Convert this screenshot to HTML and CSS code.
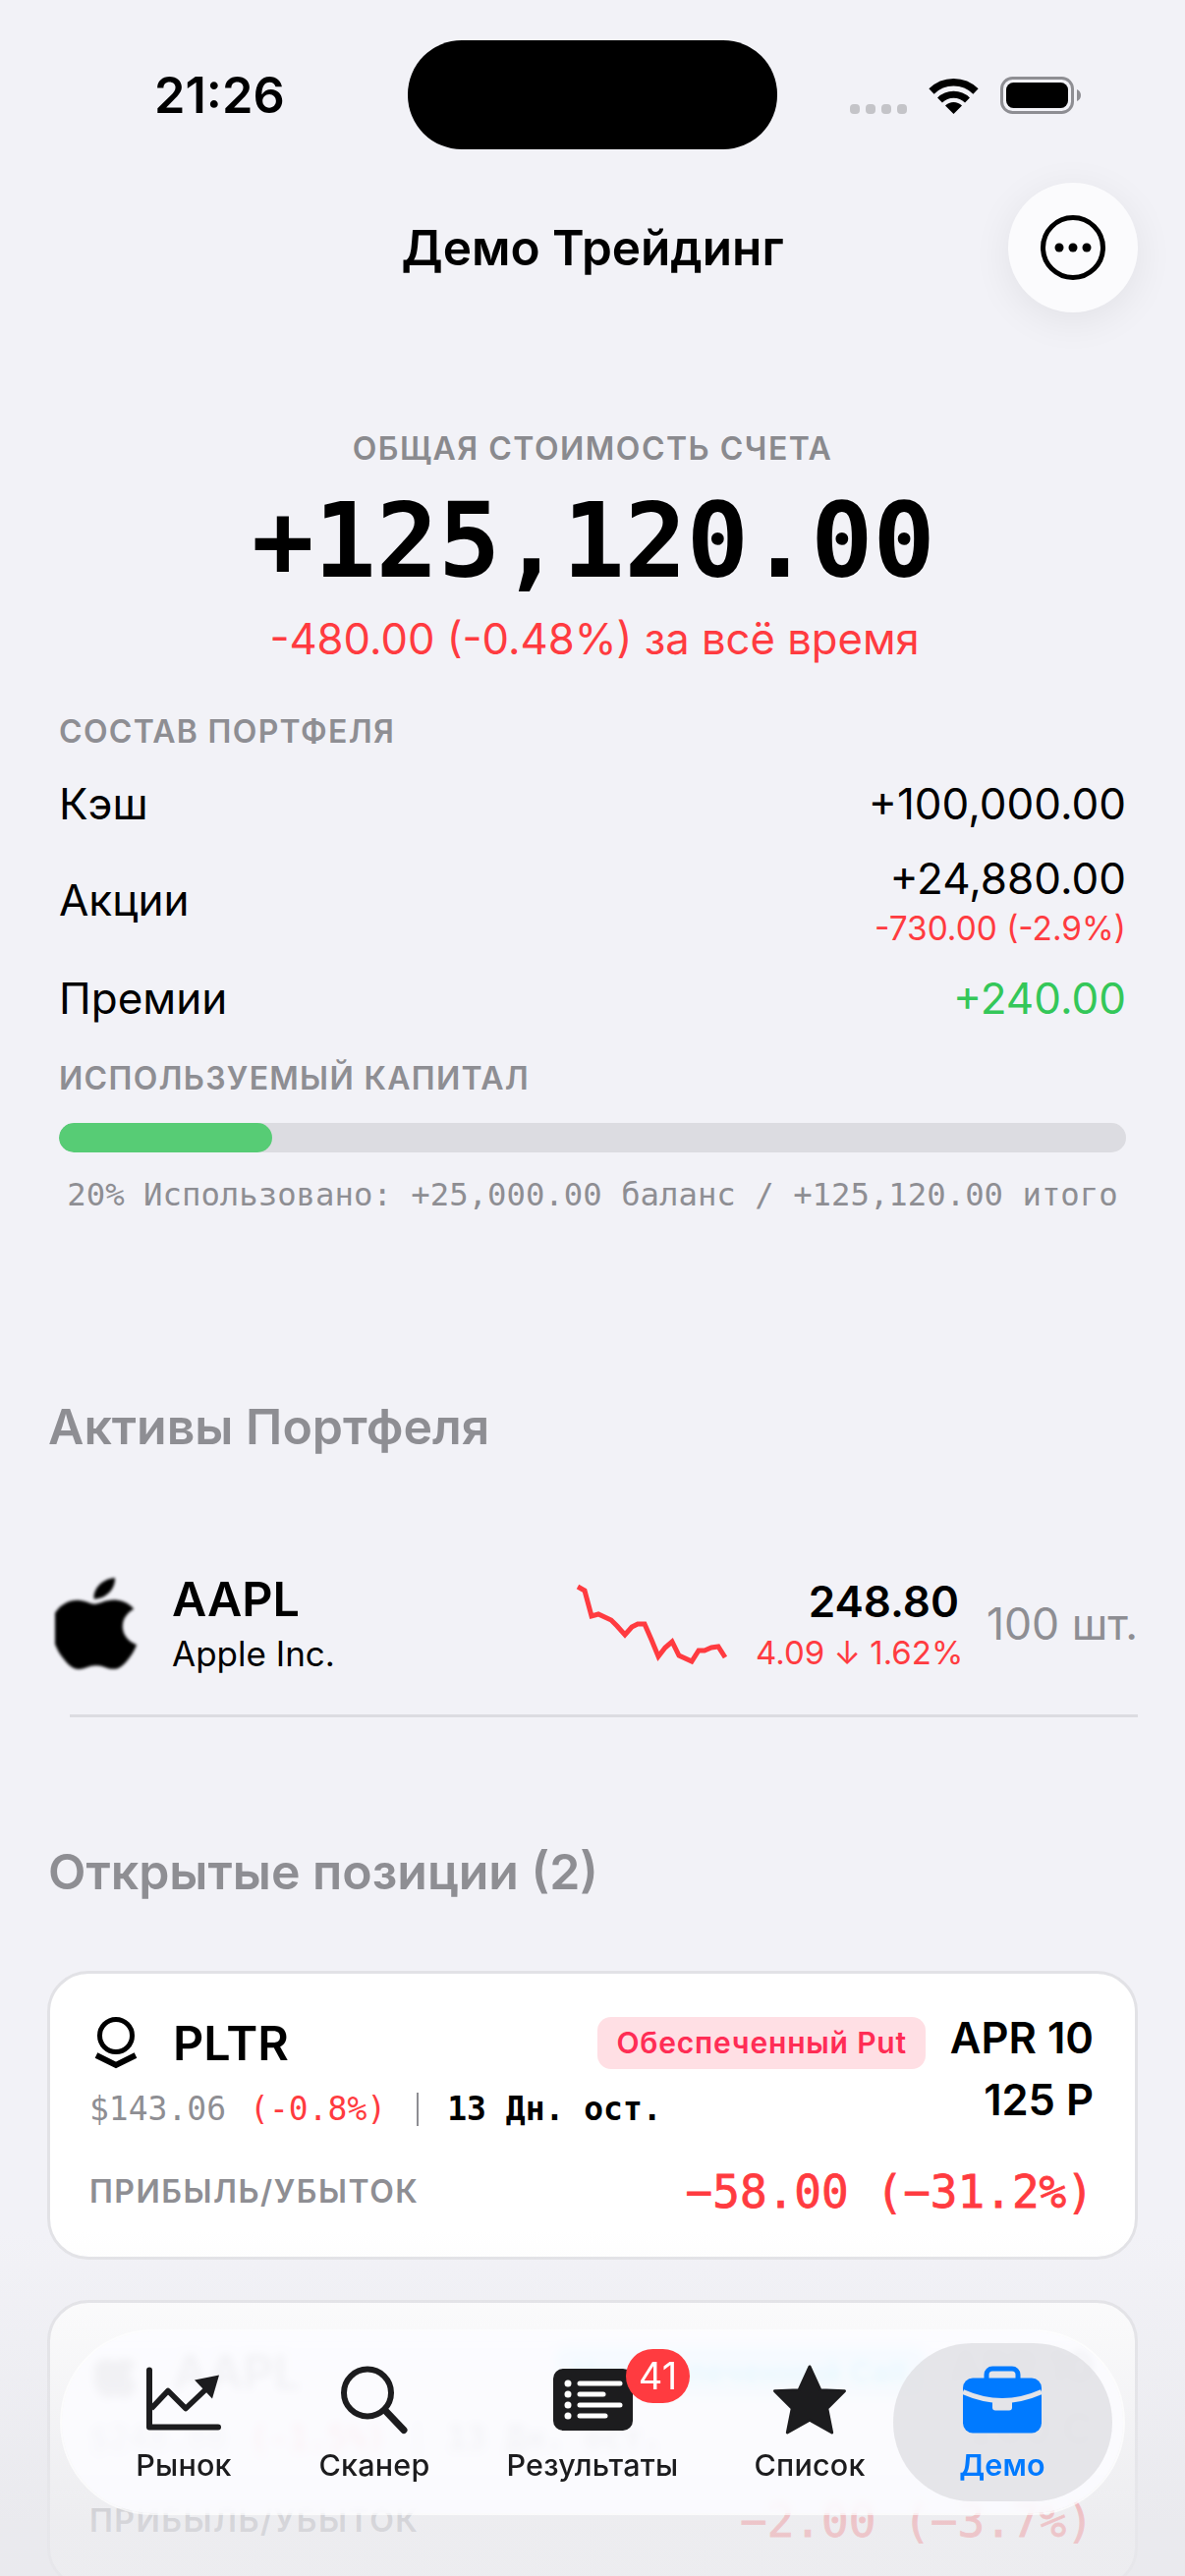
FILE: index.html
```html
<!DOCTYPE html>
<html lang="ru">
<head>
    <meta charset="utf-8">
    <title>Демо Трейдинг</title>
    <link rel="stylesheet" href="styles.css">
</head>
<body>
    <div class="page">
        <div class="status-bar">
            <span class="time">21:26</span>
            <div class="island"></div>
            <div class="signal"><i></i><i></i><i></i><i></i></div>
            <svg class="wifi" width="51" height="38" viewBox="0 0 51 38">
                <path d="M3 15A32 32 0 0 1 48 15" fill="none" stroke="#000" stroke-width="7.5"/>
                <path d="M11.500 24A20 20 0 0 1 39.500 24" fill="none" stroke="#000" stroke-width="7"/>
                <path d="M25.500 38L17 29.500A12 12 0 0 1 34 29.500Z" fill="#000"/>
            </svg>
            <svg class="battery" width="82" height="38" viewBox="0 0 82 38">
                <rect x="1.500" y="1.500" width="72" height="35" rx="11" fill="none" stroke="#8e8e93" stroke-width="3"/>
                <rect x="6" y="6" width="63" height="26" rx="7.500" fill="#000"/>
                <path d="M78 13C80.500 14 82 16 82 19C82 22 80.500 24 78 25Z" fill="#8e8e93"/>
            </svg>
        </div>

        <div class="nav">
            <h1 class="nav-title">Демо Трейдинг</h1>
            <div class="more-btn">
                <svg width="70" height="70" viewBox="0 0 70 70">
                    <circle cx="35" cy="35" r="30.500" fill="none" stroke="#000" stroke-width="5"/>
                    <circle cx="21" cy="35" r="4.500"/>
                    <circle cx="35" cy="35" r="4.500"/>
                    <circle cx="49" cy="35" r="4.500"/>
                </svg>
            </div>
        </div>

        <div class="summary">
            <div class="summary-label">ОБЩАЯ СТОИМОСТЬ СЧЕТА</div>
            <div class="summary-value">+125,120.00</div>
            <div class="summary-change">-480.00 (-0.48%) за всё время</div>
        </div>

        <div class="portfolio">
            <div class="caption caption-first">СОСТАВ ПОРТФЕЛЯ</div>
            <div class="line line-cash">
                <span>Кэш</span>
                <span>+100,000.00</span>
            </div>
            <div class="line line-stocks">
                <span>Акции</span>
                <div class="line-right">
                    <div class="line-main">+24,880.00</div>
                    <div class="line-sub">-730.00 (-2.9%)</div>
                </div>
            </div>
            <div class="line line-premium">
                <span>Премии</span>
                <span class="green">+240.00</span>
            </div>
            <div class="caption caption-capital">ИСПОЛЬЗУЕМЫЙ КАПИТАЛ</div>
            <div class="progress"><div class="progress-fill" style="width: 20%"></div></div>
            <div class="progress-text">20% Использовано: +25,000.00 баланс / +125,120.00 итого</div>
        </div>

        <h2 class="section-title section-assets">Активы Портфеля</h2>

        <div class="asset">
            <svg class="apple" width="84" height="93" viewBox="3 0 19 24" preserveAspectRatio="none">
                <path d="M12.152 6.896c-.948 0-2.415-1.078-3.96-1.04-2.04.027-3.91 1.183-4.961 3.014-2.117 3.675-.546 9.103 1.519 12.09 1.013 1.454 2.208 3.09 3.792 3.039 1.52-.065 2.09-.987 3.935-.987 1.831 0 2.35.987 3.96.948 1.637-.026 2.676-1.48 3.676-2.948 1.156-1.688 1.636-3.325 1.662-3.415-.039-.013-3.182-1.221-3.22-4.857-.026-3.04 2.48-4.494 2.597-4.559-1.429-2.09-3.623-2.324-4.39-2.376-2-.156-3.675 1.09-4.61 1.09zM15.53 3.83c.843-1.012 1.4-2.427 1.245-3.83-1.207.052-2.662.805-3.532 1.818-.78.896-1.454 2.338-1.273 3.714 1.338.104 2.715-.688 3.559-1.701"/>
            </svg>
            <div class="asset-name">
                <div class="asset-ticker">AAPL</div>
                <div class="asset-company">Apple Inc.</div>
            </div>
            <svg class="spark" width="160" height="90" viewBox="0 0 160 90">
                <polyline points="3,7 10,11 17,37 24,35 37,41 43,47 51,56 58,48 64,45 71,45 78,61 85,78 92,69 99,63 106,77 119,83 126,72 132,72 139,69 146,68 153,79" fill="none" stroke="#ff3b40" stroke-width="5"/>
            </svg>
            <div class="asset-price">
                <div class="asset-last">248.80</div>
                <div class="asset-move">4.09 ↓ 1.62%</div>
            </div>
            <div class="asset-qty">100 шт.</div>
        </div>
        <div class="divider"></div>

        <h2 class="section-title section-open">Открытые позиции (2)</h2>

        <div class="card">
            <div class="card-row">
                <div class="card-name">
                    <svg class="card-logo" width="44" height="53" viewBox="0 0 44 53">
                        <circle cx="22" cy="19" r="16.500" fill="none" stroke="#000" stroke-width="5"/>
                        <path d="M2 39L22 49L42 39" fill="none" stroke="#000" stroke-width="6"/>
                    </svg>
                    <span class="card-ticker">PLTR</span>
                </div>
                <span class="pill pill-put">Обеспеченный Put</span>
                <span class="card-expiry">APR 10</span>
            </div>
            <div class="card-row card-row-mid">
                <div class="card-info">
                    <span class="gray">$143.06</span><span class="red">(-0.8%)</span><span class="sep"></span><b>13 Дн. ост.</b>
                </div>
                <span class="card-strike">125 P</span>
            </div>
            <div class="card-row card-row-pnl">
                <span class="card-label">ПРИБЫЛЬ/УБЫТОК</span>
                <span class="card-pnl">−58.00 (−31.2%)</span>
            </div>
        </div>

        <div class="card card-next">
            <div class="card-row">
                <div class="card-name">
                    <svg class="card-logo" width="44" height="53" viewBox="3 0 19 24" preserveAspectRatio="none">
                        <path d="M12.152 6.896c-.948 0-2.415-1.078-3.96-1.04-2.04.027-3.91 1.183-4.961 3.014-2.117 3.675-.546 9.103 1.519 12.09 1.013 1.454 2.208 3.09 3.792 3.039 1.52-.065 2.09-.987 3.935-.987 1.831 0 2.35.987 3.96.948 1.637-.026 2.676-1.48 3.676-2.948 1.156-1.688 1.636-3.325 1.662-3.415-.039-.013-3.182-1.221-3.22-4.857-.026-3.04 2.48-4.494 2.597-4.559-1.429-2.09-3.623-2.324-4.39-2.376-2-.156-3.675 1.09-4.61 1.09z"/>
                    </svg>
                    <span class="card-ticker">AAPL</span>
                </div>
                <span class="pill pill-call">Необеспеченный Call</span>
                <span class="card-expiry">APR 10</span>
            </div>
            <div class="card-row card-row-mid">
                <div class="card-info">
                    <span class="gray">$248.80</span><span class="red">(-1.5%)</span><span class="sep"></span><b>13 Дн. ост.</b>
                </div>
                <span class="card-strike">260 C</span>
            </div>
            <div class="card-row card-row-pnl">
                <span class="card-label">ПРИБЫЛЬ/УБЫТОК</span>
                <span class="card-pnl">−2.00 (−3.7%)</span>
            </div>
        </div>

        <div class="bottom-fade"></div>

        <div class="tabbar">
            <div class="tab">
                <svg class="tab-icon" width="76" height="66" viewBox="0 0 76 66">
                    <path d="M3 3V61H73" fill="none" stroke="#1c1c1e" stroke-width="6" stroke-linecap="round" stroke-linejoin="round"/>
                    <path d="M5 42L22 24L40 42L60 23" fill="none" stroke="#1c1c1e" stroke-width="5.500" stroke-linejoin="round"/>
                    <path d="M74 8L49 13L67 32Z" fill="#1c1c1e"/>
                </svg>
                <span class="tab-label">Рынок</span>
            </div>
            <div class="tab">
                <svg class="tab-icon" width="68" height="68" viewBox="0 0 68 68">
                    <circle cx="27" cy="27" r="24" fill="none" stroke="#1c1c1e" stroke-width="6"/>
                    <path d="M45 45L64 65" fill="none" stroke="#1c1c1e" stroke-width="7" stroke-linecap="round"/>
                </svg>
                <span class="tab-label">Сканер</span>
            </div>
            <div class="tab">
                <svg class="tab-icon" width="81" height="63" viewBox="0 0 81 63">
                    <rect width="81" height="63" rx="10" fill="#1c1c1e"/>
                    <g fill="#fff">
                        <circle cx="15" cy="15" r="3.500"/>
                        <circle cx="15" cy="26" r="3.500"/>
                        <circle cx="15" cy="37" r="3.500"/>
                        <circle cx="15" cy="48" r="3.500"/>
                    </g>
                    <g stroke="#fff" stroke-width="5" stroke-linecap="round">
                        <path d="M27 15H68"/>
                        <path d="M27 26H51"/>
                        <path d="M27 37H68"/>
                        <path d="M27 48H53"/>
                    </g>
                </svg>
                <span class="tab-label">Результаты</span>
                <span class="badge">41</span>
            </div>
            <div class="tab">
                <svg class="tab-icon" width="78" height="74" viewBox="0 0 78 74">
                    <path d="M39 3L50 27L75 28L57 46L62 71L39 58L16 71L21 46L3 28L28 27Z" fill="#1c1c1e" stroke="#1c1c1e" stroke-width="3" stroke-linejoin="round"/>
                </svg>
                <span class="tab-label">Список</span>
            </div>
            <div class="tab tab-active">
                <svg class="tab-icon" width="80" height="68" viewBox="0 0 80 68">
                    <rect x="24" y="2.500" width="32" height="20" rx="6" fill="none" stroke="#007aff" stroke-width="5"/>
                    <rect y="12" width="80" height="56" rx="10" fill="#007aff"/>
                    <path d="M0 26Q40 44 80 26" fill="none" stroke="#e4e4e8" stroke-width="5"/>
                    <rect x="30" y="34" width="20" height="11" rx="3" fill="#e4e4e8"/>
                </svg>
                <span class="tab-label">Демо</span>
            </div>
        </div>
    </div>
</body>
</html>
```

FILE: styles.css
```css
* {
    box-sizing: border-box;
}

body {
    margin: 0;
    font-family: Inter, "Noto Sans", sans-serif;
    color: #000;
}

.page {
    position: relative;
    width: 1206px;
    height: 2622px;
    overflow: hidden;
    background-color: #f2f2f7;
}

.status-bar {
    display: flex;
    align-items: flex-start;
    height: 152px;
    padding: 41px 0 0 157px;
}

.time {
    width: 258px;
    margin-top: 26px;
    font-size: 50.500px;
    line-height: 60px;
    font-weight: 600;
}

.island {
    width: 376px;
    height: 111px;
    border-radius: 55px;
    background-color: #000;
}

.signal {
    display: flex;
    gap: 6px;
    margin: 65px 0 0 74px;
}

.signal i {
    width: 10px;
    height: 10px;
    border-radius: 4px;
    background-color: #c4c4c8;
}

.wifi {
    margin: 37px 0 0 22px;
}

.battery {
    margin: 37px 0 0 22px;
}

.nav {
    position: relative;
    height: 132px;
    margin-top: 34px;
    display: flex;
    align-items: center;
    justify-content: center;
}

.nav-title {
    margin: 0;
    font-size: 49.500px;
    font-weight: 600;
    line-height: 60px;
}

.more-btn {
    position: absolute;
    right: 48px;
    top: 0;
    width: 132px;
    height: 132px;
    border-radius: 50%;
    background-color: #fbfbfd;
    box-shadow: 0 8px 40px rgba(0, 0, 0, 0.07);
    display: flex;
    align-items: center;
    justify-content: center;
}

.summary {
    margin-top: 119px;
    text-align: center;
}

.summary-label {
    font-size: 32px;
    line-height: 40px;
    font-weight: 600;
    letter-spacing: 1.500px;
    color: #8a8a8e;
}

.summary-value {
    margin-top: 14px;
    font-family: "DejaVu Sans Mono", monospace;
    font-size: 105px;
    line-height: 120px;
    font-weight: 700;
    padding-left: 2px;
}

.summary-change {
    margin-top: 12px;
    font-size: 43.600px;
    line-height: 56px;
    color: #ff3b40;
    padding-left: 4px;
}

.portfolio {
    margin-top: 46px;
    padding: 0 60px;
}

.caption {
    font-size: 32px;
    line-height: 40px;
    font-weight: 600;
    letter-spacing: 1.300px;
    color: #8e8e93;
}

.caption-capital {
    margin-top: 34px;
}

.line {
    display: flex;
    justify-content: space-between;
    align-items: center;
    font-size: 44px;
    line-height: 56px;
}

.line-cash {
    margin-top: 25px;
}

.line-stocks {
    margin-top: 23px;
}

.line-premium {
    margin-top: 25px;
}

.line-right {
    text-align: right;
}

.line-main {
    line-height: 50px;
}

.line-sub {
    margin-top: 8px;
    font-size: 33.400px;
    line-height: 36px;
    color: #ff3b40;
}

.green {
    color: #34c759;
}

.progress {
    height: 30px;
    margin-top: 25px;
    border-radius: 15px;
    background-color: #dcdce1;
    overflow: hidden;
}

.progress-fill {
    height: 100%;
    border-radius: 15px;
    background-color: #57cc75;
}

.progress-text {
    margin-top: 23px;
    font-family: "DejaVu Sans Mono", monospace;
    font-size: 32.300px;
    line-height: 40px;
    color: #8e8e93;
    text-align: center;
    white-space: nowrap;
}

.section-title {
    margin: 0;
    padding-left: 49px;
    font-size: 50px;
    line-height: 60px;
    font-weight: 600;
    color: #8e8e93;
}

.section-assets {
    margin-top: 186px;
}

.section-open {
    margin-top: 127px;
}

.asset {
    display: flex;
    align-items: center;
    height: 105px;
    margin-top: 118px;
    padding: 0 48px 0 56px;
}

.apple {
    filter: blur(1.500px);
}

.asset-name {
    flex: 1;
    margin-left: 35px;
}

.asset-ticker {
    font-size: 48.500px;
    line-height: 56px;
    font-weight: 600;
}

.asset-company {
    margin-top: 5px;
    font-size: 35px;
    line-height: 44px;
}

.spark {
    margin-right: 24px;
}

.asset-price {
    width: 207px;
    text-align: right;
}

.asset-last {
    font-size: 44px;
    line-height: 56px;
    font-weight: 600;
}

.asset-move {
    margin-top: 2px;
    font-size: 33px;
    line-height: 44px;
    color: #ff3b40;
    white-space: nowrap;
}

.asset-qty {
    width: 155px;
    margin-left: 27px;
    font-size: 44.500px;
    color: #8e8e93;
    white-space: nowrap;
    text-align: right;
}

.divider {
    height: 3px;
    margin: 40px 48px 0 71px;
    background-color: #dcdce1;
}

.card {
    margin: 71px 48px 0;
    padding: 44px 42px 38px 40px;
    border: 3px solid #e2e2e6;
    border-radius: 42px;
    background-color: #fff;
}

.card-next {
    margin-top: 41px;
}

.card-row {
    display: flex;
    justify-content: space-between;
}

.card-name {
    flex: 1;
    display: flex;
    align-items: center;
    padding-left: 5px;
}

.card-ticker {
    margin-left: 36px;
    font-size: 48.500px;
    line-height: 53px;
    font-weight: 600;
}

.pill {
    height: 53px;
    margin-right: 25px;
    padding: 0 19px;
    border-radius: 14px;
    font-size: 30px;
    line-height: 53px;
    font-weight: 600;
    letter-spacing: 0.800px;
    white-space: nowrap;
}

.pill-put {
    background-color: #ffdfe4;
    color: #ff2d55;
}

.pill-call {
    background-color: #bff2ff;
    color: #00cfff;
}

.card-expiry {
    font-size: 43.500px;
    line-height: 42px;
    font-weight: 600;
    white-space: nowrap;
}

.card-row-mid {
    height: 57px;
    margin-top: 7px;
}

.card-info {
    align-self: flex-end;
    display: flex;
    align-items: center;
    font-family: "DejaVu Sans Mono", monospace;
    font-size: 33px;
    line-height: 46px;
    white-space: pre;
}

.gray {
    color: #8e8e93;
}

.red {
    margin-left: 24px;
    color: #ff3b40;
}

.sep {
    width: 2px;
    height: 34px;
    margin: 0 29px 0 31px;
    background-color: #8e8e93;
}

.card-strike {
    font-size: 43.500px;
    line-height: 48px;
    font-weight: 600;
}

.card-row-pnl {
    align-items: center;
    margin-top: 33px;
}

.card-label {
    font-size: 32px;
    line-height: 56px;
    font-weight: 600;
    letter-spacing: 1.500px;
    color: #8e8e93;
}

.card-pnl {
    font-family: "DejaVu Sans Mono", monospace;
    font-size: 46px;
    line-height: 56px;
    color: #ff3b40;
    -webkit-text-stroke: 0.8px #ff3b40;
}

.card-next .card-ticker,
.card-next .card-expiry,
.card-next .card-strike,
.card-next b {
    color: #777;
}

.card-next .card-logo {
    fill: #777;
}

.bottom-fade {
    position: absolute;
    left: 0;
    right: 0;
    top: 2270px;
    bottom: 0;
    background: linear-gradient(to bottom, rgba(232, 232, 236, 0), rgba(232, 232, 236, 0.8) 85%);
}

.tabbar {
    position: absolute;
    left: 63px;
    top: 2373px;
    width: 1080px;
    height: 185px;
    padding: 33px 0 0 27px;
    display: grid;
    grid-template-columns: 194px 194px 250px 192px 200px;
    border-radius: 92px;
    background-color: rgba(252, 252, 255, 0.88);
    box-shadow: 0 0 0 2px rgba(255, 255, 255, 0.7);
    -webkit-backdrop-filter: blur(4px);
    backdrop-filter: blur(4px);
}

.tab {
    position: relative;
    display: flex;
    flex-direction: column;
    align-items: center;
}

.tab-active::before {
    content: "";
    position: absolute;
    left: -11px;
    top: -21px;
    width: 223px;
    height: 161px;
    border-radius: 80px;
    background-color: rgba(224, 224, 228, 0.8);
}

.tab-icon {
    position: relative;
    height: 73px;
    align-self: center;
}

.tab-label {
    position: relative;
    margin-top: 12px;
    font-size: 30.500px;
    line-height: 36px;
    font-weight: 500;
    letter-spacing: 0.200px;
    color: #1c1c1e;
    white-space: nowrap;
}

.tab-active .tab-label {
    color: #007aff;
    font-weight: 600;
}

.badge {
    position: absolute;
    left: 159px;
    top: -15px;
    width: 65px;
    height: 55px;
    border-radius: 28px;
    background-color: #ff3b40;
    color: #fff;
    font-size: 38px;
    line-height: 55px;
    text-align: center;
}
```
